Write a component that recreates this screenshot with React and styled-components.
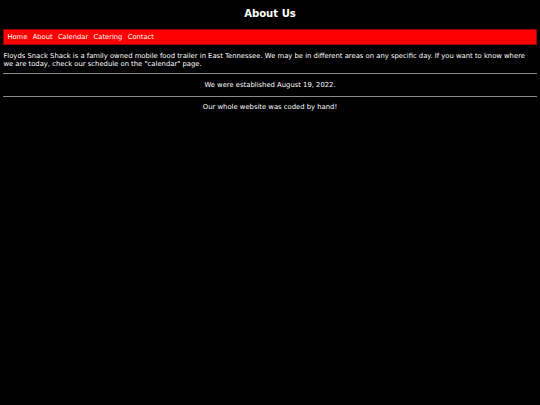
import React from "react";
import styled, { createGlobalStyle } from "styled-components";

const GlobalStyle = createGlobalStyle`
  html, body {
    background-color: #000;
  }
  body {
    margin: 0 3.4px 3.4px;
    color: #fff;
    font-family: Verdana, "DejaVu Sans", sans-serif;
    font-size: 6.82px;
  }
`;

const navLinks = ["Home", "About", "Calendar", "Catering", "Contact"];

const App = () => {
  return (
    <>
      <GlobalStyle />
      <Title>About Us</Title>
      <NavBar>
        {navLinks.map((link) => (
          <NavLink key={link} href="#">
            {link}
          </NavLink>
        ))}
      </NavBar>
      <Intro>
        Floyds Snack Shack is a family owned mobile food trailer in East
        Tennessee. We may be in different areas on any specific day. If you want
        to know where we are today, check our schedule on the "calendar" page.
      </Intro>
      <Divider />
      <CenterText>We were established August 19, 2022.</CenterText>
      <Divider />
      <CenterText>Our whole website was coded by hand!</CenterText>
    </>
  );
};

export default App;

const Title = styled.h2`
  text-align: center;
  font-size: 10.1px;
  font-weight: 700;
  margin: 8.4px 0;
  line-height: 12px;
`;

const NavBar = styled.nav`
  display: flex;
  align-items: center;
  gap: 5.3px;
  height: 14px;
  padding: 0 3px;
  background-color: #ff0000;
  border: 0.5px solid #a00000;
`;

const NavLink = styled.a`
  color: #fff;
  text-decoration: none;
  font-size: 6.75px;
`;

const Intro = styled.p`
  margin: 6.75px 0 5.5px;
  line-height: 8px;
`;

const Divider = styled.hr`
  margin: 3.4px 0 4.4px;
  border: none;
  border-top: 1px solid #8a8a8a;
  height: 0;
`;

const CenterText = styled.p`
  text-align: center;
  margin: 6.75px 0;
  line-height: 8px;
`;
